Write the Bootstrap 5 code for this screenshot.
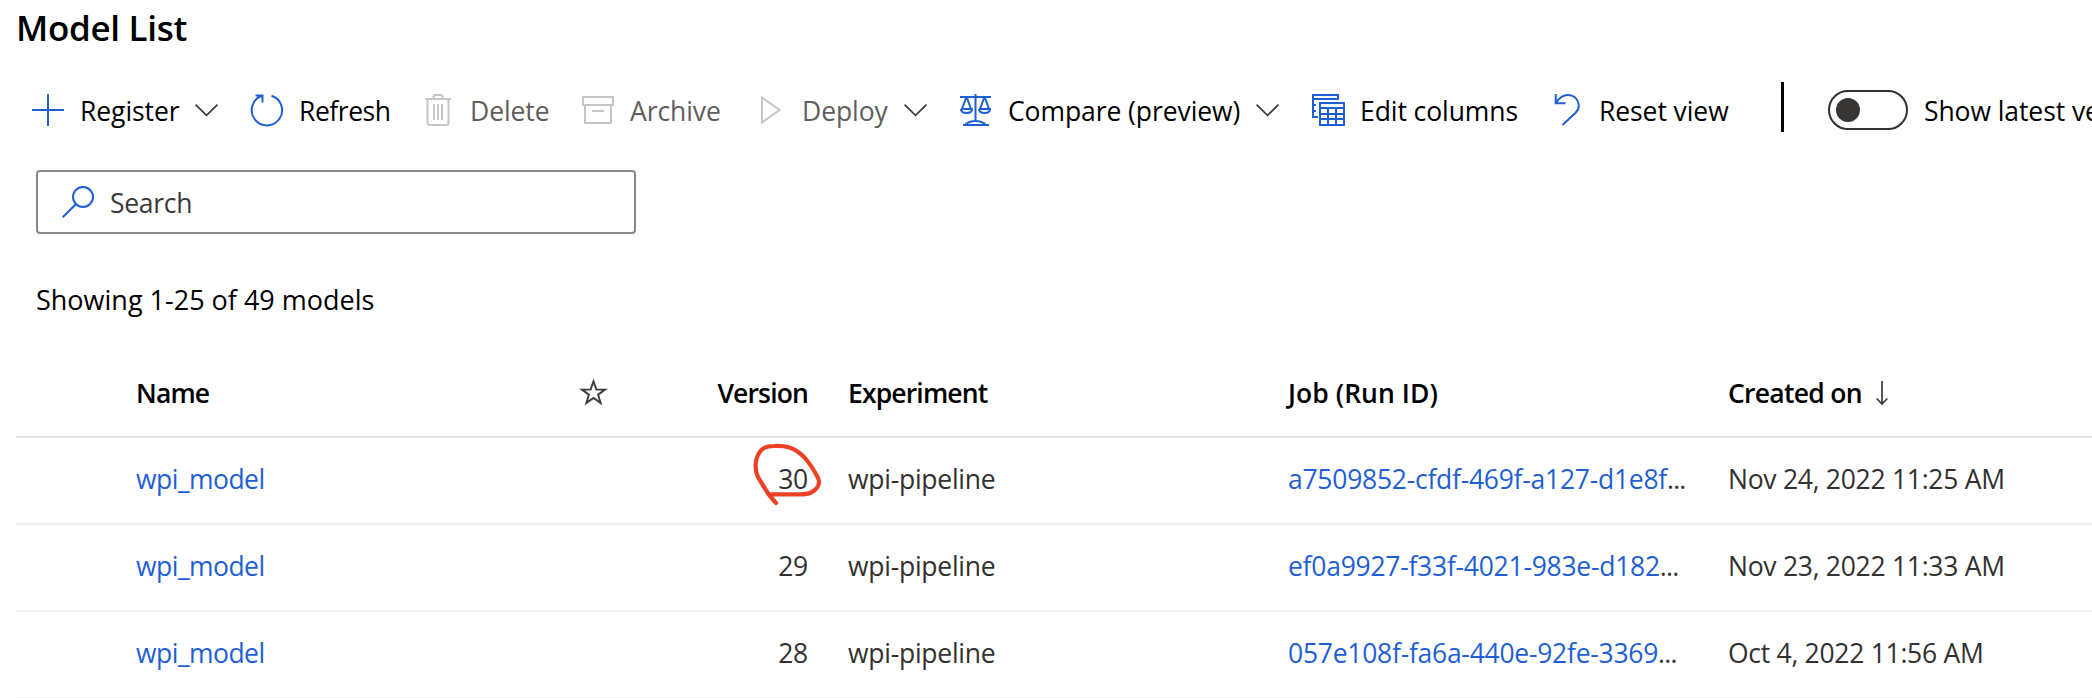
<!DOCTYPE html>
<html lang="en">
<head>
<meta charset="utf-8">
<meta name="viewport" content="width=device-width, initial-scale=1">
<title>Model List</title>
<link href="https://cdn.jsdelivr.net/npm/bootstrap@5.3.0/dist/css/bootstrap.min.css" rel="stylesheet">
<style>
  :root { --brand: #1f5fd6; --ink: #323130; }
  body { font-family: "Open Sans", "Noto Sans", sans-serif; font-size: 26.5px; line-height: 36px; color: #000; background: #fff; overflow: hidden; }
  svg { display: block; flex: none; overflow: visible; }
  .page-title { font-size: 35px; font-weight: 600; line-height: 56px; letter-spacing: -.3px; padding-left: 16px; }
  .commands { display: grid; grid-template-columns: 219px 171px 160px 172px 206px 352px 239px 230px 47px auto; height: 56px; margin-top: 26px; padding-left: 32px; white-space: nowrap; letter-spacing: -.08px; }
  .cmd { display: flex; align-items: center; gap: 16px; padding: 0; border: 0; background: none; color: #000; text-align: left; letter-spacing: inherit; }
  .commands span, .search-box span { padding-top: 2px; }
  .cmd:disabled { color: #605e5c; }
  .cmd .glyph { stroke: var(--brand); fill: none; stroke-width: 2; }
  .cmd:disabled .glyph { stroke: #c8c6c4; }
  .chev { stroke: #3b3a39; fill: none; stroke-width: 1.7; }
  .tight { letter-spacing: -.45px; }
  .rule { width: 3px; height: 50px; background: #000; margin-top: -6px; }
  .toggle { width: 80px; height: 40px; border: 2px solid var(--ink); border-radius: 20px; padding: 0 6px; flex: none; }
  .knob { width: 24px; height: 24px; border-radius: 50%; background: #373635; }
  .search-box { width: 600px; height: 64px; margin: 32px 0 0 36px; border: 2px solid #8a8886; border-radius: 4px; padding-left: 24px; gap: 16px; color: #3b3a39; letter-spacing: -.3px; }
  .count { font-size: 27px; line-height: 36px; margin: 48px 0 0 36px; }
  .models { width: 2076px; margin: 32px 0 0 16px; table-layout: fixed; border-collapse: separate; border-spacing: 0; white-space: nowrap; color: var(--ink); letter-spacing: -.26px; }
  .models th, .models td { padding: 0; vertical-align: middle; }
  .models th { height: 88px; font-weight: 600; color: #000; border-bottom: 2px solid #e6e6e6; letter-spacing: -.85px; }
  .models td { height: 87px; border-bottom: 2px solid #f3f2f1; padding-bottom: 4px; }
  .models a { color: var(--brand); text-decoration: none; }
  .models .model-link { letter-spacing: -.52px; }
  .models .dots { letter-spacing: -.8px; }
  .models .created { letter-spacing: -.28px; }
  .models .jobhead { letter-spacing: .05px; }
  .models .createdhead { letter-spacing: -.72px; }
  .sort-arrow { margin-left: 14px; }
  .star { margin-top: -2px; }
  .marker { position: absolute; right: -14px; top: -17px; }
</style>
</head>
<body>
<h1 class="page-title m-0">Model List</h1>

<div class="commands" role="toolbar">
  <button class="cmd"><svg class="glyph" width="32" height="32"><path d="M16 0v32M0 16h32"/></svg><span>Register</span><svg class="chev" width="24" height="12"><path d="M.6.6 11.5 11.4 22.5.6"/></svg></button>
  <button class="cmd"><svg class="glyph" width="32" height="32"><path d="M20.5 1.7A15.2 15.2 0 1 1 11 1.8M4.5 1.4h7v7"/></svg><span class="tight">Refresh</span></button>
  <button class="cmd" disabled><svg class="glyph" width="32" height="32"><path d="M3 5h26M11.5 5V3q0-2 2-2h5q2 0 2 2v2M5.500 5v23.500q0 2.500 2.500 2.500h16q2.500 0 2.500-2.500V5M12 10v16M16 10v16M20 10v16"/></svg><span>Delete</span></button>
  <button class="cmd" disabled><svg class="glyph" width="32" height="32"><path d="M1 3h30v8H1zM3 11v18h26V11M10 17h12"/></svg><span>Archive</span></button>
  <button class="cmd" disabled><svg class="glyph" width="32" height="32"><path d="M8 3.500 25.500 16 8 28.500z"/></svg><span>Deploy</span><svg class="chev" width="24" height="12"><path d="M.6.6 11.500 11.400 22.500.6"/></svg></button>
  <button class="cmd"><svg class="glyph" width="32" height="32"><path d="M15.500 0v27M0 3h31M3 31h26M5 31q4-4 10.500-4T26 31M6 4 2 15M7 4l4 11M24 4l-4 11M25 4l4 11M1 15h11q0 4-5.500 4T1 15M19 15h11q0 4-5.500 4T19 15"/></svg><span>Compare (preview)</span><svg class="chev" width="24" height="12"><path d="M.6.6 11.500 11.400 22.500.6"/></svg></button>
  <button class="cmd"><svg class="glyph" width="32" height="32"><path d="M6 23H1V1h25v4H1M26 4v2M1 11h3M1 17h3M8 9h24v22H8zM8 14h24M8 20h24M8 25h24M16 14v17M24 14v17"/></svg><span>Edit columns</span></button>
  <button class="cmd"><svg class="glyph" width="32" height="32"><path d="M4.700 0v9.200H14.500M5 8.700C9 3 12 1 16.500 1 24 1 27.800 6.500 27.800 11.500q0 4-3.400 7.500L11.500 31"/></svg><span>Reset view</span></button>
  <div class="d-flex align-items-center"><div class="rule"></div></div>
  <div class="d-flex align-items-center overflow-hidden"><div class="toggle d-flex align-items-center"><div class="knob"></div></div><span class="ms-3">Show latest versions only</span></div>
</div>

<div class="search-box d-flex align-items-center">
  <svg width="32" height="32" fill="none" stroke="#1f5fd6" stroke-width="2"><circle cx="21" cy="11" r="10"/><path d="M14 18 .7 31.300"/></svg><span>Search</span>
</div>
<p class="count mb-0">Showing 1-25 of 49 models</p>

<table class="models">
  <colgroup><col style="width:120px"><col style="width:444px"><col style="width:60px"><col style="width:168px"><col style="width:40px"><col style="width:440px"><col style="width:440px"><col style="width:364px"></colgroup>
  <thead>
    <tr>
      <th></th><th>Name</th>
      <th><svg class="star" width="27" height="26" fill="none" stroke="#3b3a39" stroke-width="1.900"><path d="m13.500 2.300 2.900 8.300h8.600l-6.900 5.100 2.600 8.400-7.200-5.100-7.200 5.100 2.600-8.400-6.900-5.100h8.600z"/></svg></th>
      <th class="text-end">Version</th><th></th><th>Experiment</th><th class="jobhead">Job (Run ID)</th>
      <th class="createdhead"><div class="d-flex align-items-center"><span>Created on</span><svg class="sort-arrow" width="12" height="24" fill="none" stroke="#3b3a39" stroke-width="1.700"><path d="M6 0v23M.7 17.500 6 23l5.300-5.500"/></svg></div></th>
    </tr>
  </thead>
  <tbody>
    <tr>
      <td></td><td><a class="model-link" href="#">wpi_model</a></td><td></td>
      <td class="text-end"><div class="position-relative">30<svg class="marker" width="68" height="62" fill="none" stroke="#ee4025" stroke-width="4.200" stroke-linecap="round" stroke-linejoin="round"><path d="M22 59C19 56 18 54 14.500 50 11 45 7 38 4 33 1 27 .8 18 3.500 12 7 4 12 2 20 2 31 1.500 40 2.500 51 14 57 21 61 28 64 34 67 41 62 46 57 48.500 53 50.500 50 50.300 44 50.400L15 50.400"/></svg></div></td>
      <td></td><td>wpi-pipeline</td><td><a href="#">a7509852-cfdf-469f-a127-d1e8f</a><span class="dots">...</span></td><td class="created">Nov 24, 2022 11:25 AM</td>
    </tr>
    <tr><td></td><td><a class="model-link" href="#">wpi_model</a></td><td></td><td class="text-end">29</td><td></td><td>wpi-pipeline</td><td><a href="#">ef0a9927-f33f-4021-983e-d182</a><span class="dots">...</span></td><td class="created">Nov 23, 2022 11:33 AM</td></tr>
    <tr><td></td><td><a class="model-link" href="#">wpi_model</a></td><td></td><td class="text-end">28</td><td></td><td>wpi-pipeline</td><td><a href="#">057e108f-fa6a-440e-92fe-3369</a><span class="dots">...</span></td><td class="created">Oct 4, 2022 11:56 AM</td></tr>
  </tbody>
</table>
<script src="https://cdn.jsdelivr.net/npm/bootstrap@5.3.0/dist/js/bootstrap.bundle.min.js"></script>
</body>
</html>
